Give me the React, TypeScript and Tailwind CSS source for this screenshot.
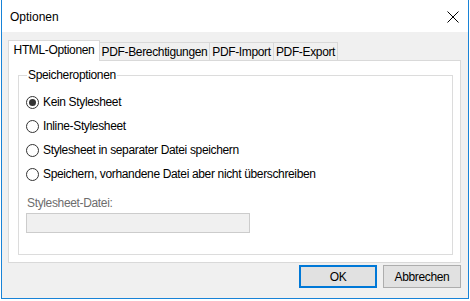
import React, { useState } from 'react'

const tabs = [
  { name: 'HTML-Optionen', width: 'w-[92px]' },
  { name: 'PDF-Berechtigungen', width: 'w-[110px]' },
  { name: 'PDF-Import', width: 'w-[64px]' },
  { name: 'PDF-Export', width: 'w-[64px]' }
]

const options = [
  'Kein Stylesheet',
  'Inline-Stylesheet',
  'Stylesheet in separater Datei speichern',
  'Speichern, vorhandene Datei aber nicht überschreiben'
]

const Radio = ({ checked }: { checked: boolean }) => (
  <span className="w-[13px] h-[13px] rounded-full border border-[#333333] bg-white flex items-center justify-center shrink-0">
    {checked && <span className="w-[7px] h-[7px] rounded-full bg-[#333333]" />}
  </span>
)

const App = () => {
  const [activeTab, setActiveTab] = useState(0)
  const [selected, setSelected] = useState(0)

  return (
    <div
      className="w-[470px] h-[301px] bg-white text-[12px] text-black leading-[14px] tracking-[-0.35px]"
      style={{ fontFamily: '"Liberation Sans", Arial, sans-serif' }}
    >
      <div className="ml-[1px] w-[468px] h-[299px] border-x border-b border-[#1883d7] flex flex-col">
        {/* Title bar */}
        <div className="h-[32px] bg-white flex items-center justify-between pl-[8px] pr-[9px] shrink-0">
          <span className="text-[12px] pt-[1px] tracking-normal">Optionen</span>
          <svg width="12" height="12" viewBox="0 0 12 12" className="mt-[2px]">
            <path d="M0.5 0.5 L11.5 11.5 M11.5 0.5 L0.5 11.5" stroke="#000" strokeWidth="1" />
          </svg>
        </div>

        {/* Body */}
        <div className="flex-1 bg-[#f0f0f0] pl-[6px] pr-[7px] pt-[8px] flex flex-col">
          {/* Tabs */}
          <div className="flex items-end h-[21px] relative z-10">
            {tabs.map((tab, i) =>
              activeTab === i ? (
                <button
                  key={tab.name}
                  onClick={() => setActiveTab(i)}
                  className={`${tab.width} h-[21px] bg-white border border-b-0 border-[#d9d9d9] pb-[2px]`}
                >
                  {tab.name}
                </button>
              ) : (
                <button
                  key={tab.name}
                  onClick={() => setActiveTab(i)}
                  className={`${tab.width} h-[18px] mb-[1px] bg-[#f0f0f0] border border-l-0 border-b-0 border-[#d9d9d9] pt-[1px]`}
                >
                  {tab.name}
                </button>
              )
            )}
          </div>

          {/* Panel */}
          <div className="h-[203px] -mt-[1px] bg-white border border-[#d9d9d9] pt-[7px] pl-[9px] pr-[7px]">
            <fieldset className="h-[187px] border border-[#dcdcdc] pl-[7px] pr-[7px]">
              <legend className="ml-[1px] px-[1px] text-black">Speicheroptionen</legend>

              <div className="flex flex-col pt-[8px]">
                {options.map((label, i) => (
                  <label
                    key={label}
                    onClick={() => setSelected(i)}
                    className="h-[24px] flex items-center gap-[4px] cursor-default"
                  >
                    <Radio checked={selected === i} />
                    <span>{label}</span>
                  </label>
                ))}
              </div>

              <div className="mt-[10px] text-[#6d6d6d] pl-[1px]">Stylesheet-Datei:</div>
              <div className="mt-[3px] w-[224px] h-[20px] bg-[#f0f0f0] border border-[#cccccc]" />
            </fieldset>
          </div>

          {/* Buttons */}
          <div className="flex justify-end gap-[6px] mt-[2px]">
            <button className="w-[78px] h-[23px] bg-[#e1e1e1] border-2 border-[#0078d7]">OK</button>
            <button className="w-[78px] h-[23px] bg-[#e1e1e1] border border-[#adadad]">Abbrechen</button>
          </div>
        </div>
      </div>
    </div>
  )
}

export default App
